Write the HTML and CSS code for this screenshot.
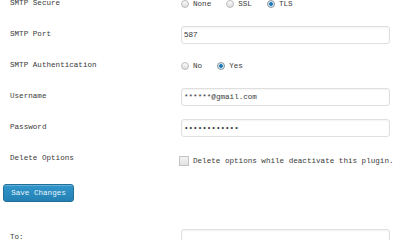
FILE: index.html
```html
<!DOCTYPE html>
<html lang="en">
<head>
<meta charset="UTF-8">
<title>SMTP Settings</title>
<link rel="stylesheet" href="styles.css">
</head>
<body>

<form class="settings">
  <div class="form-row">
    <label class="row-label">SMTP Secure</label>
    <div class="choices">
      <label class="choice"><input type="radio" name="secure"> None</label>
      <label class="choice"><input type="radio" name="secure"> SSL</label>
      <label class="choice"><input type="radio" name="secure" checked> TLS</label>
    </div>
  </div>

  <div class="form-row">
    <label class="row-label">SMTP Port</label>
    <input class="text-field port" type="text" value="587">
  </div>

  <div class="form-row">
    <label class="row-label">SMTP Authentication</label>
    <div class="choices">
      <label class="choice"><input type="radio" name="auth"> No</label>
      <label class="choice"><input type="radio" name="auth" checked> Yes</label>
    </div>
  </div>

  <div class="form-row">
    <label class="row-label">Username</label>
    <input class="text-field" type="text" value="******@gmail.com">
  </div>

  <div class="form-row">
    <label class="row-label">Password</label>
    <input class="text-field" type="password" value="xxxxxxxxxxxx">
  </div>

  <div class="form-row">
    <label class="row-label">Delete Options</label>
    <label class="choice delete-choice"><input type="checkbox"> Delete options while deactivate this plugin.</label>
  </div>

  <div class="actions">
    <button type="button" class="button-primary">Save Changes</button>
  </div>

  <div class="form-row test-row">
    <label class="row-label">To:</label>
    <input class="text-field" type="text" value="">
  </div>
</form>

</body>
</html>
```

FILE: styles.css
```css
body {
  margin: 0;
  background-color: #fff;
  color: #3a3a3a;
  font-family: "Liberation Mono", "DejaVu Sans Mono", monospace;
  font-size: 7.6px;
  overflow: hidden;
}

.settings {
  margin-top: -12px;
}

.form-row {
  display: grid;
  grid-template-columns: 181px 1fr;
  align-items: center;
  height: 31px;
}

.row-label {
  padding-left: 10px;
  margin-top: -2px;
}

.choices {
  display: flex;
  gap: 15px;
}

.choice {
  display: flex;
  align-items: center;
  gap: 4px;
  white-space: nowrap;
}

.delete-choice {
  margin-top: 4px;
}

/* radio and checkbox look like the old admin skin */
.choice input {
  appearance: none;
  margin: 0;
  width: 8px;
  height: 8px;
  border: 1px solid #bbb;
  background: linear-gradient(#fdfdfd, #dcdcdc);
  box-sizing: border-box;
}

.choice input[type="radio"] {
  border-radius: 50%;
}

.choice input[type="radio"]:checked {
  border-color: #8a9aa6;
  background: radial-gradient(circle, #1a6fa8 0, #2b86c2 1.6px, #dfe6ea 2.2px, #d0d4d6 100%);
}

.choice input[type="checkbox"] {
  width: 10px;
  height: 10px;
  margin-left: -2px;
  border-color: #c4c4c4;
  background: linear-gradient(#f4f4f4, #e2e2e2);
}

.text-field {
  width: 209px;
  height: 18px;
  box-sizing: border-box;
  margin: 0;
  padding: 0 2px;
  border: 1px solid #dfdfdf;
  border-radius: 3px;
  box-shadow: inset 0 1px 2px rgba(0, 0, 0, 0.05);
  font-family: "Liberation Mono", monospace;
  font-size: 7.6px;
  color: #3a3a3a;
  background: #fff;
}

.text-field.port {
  font-family: "Liberation Sans", Arial, sans-serif;
  font-size: 8px;
}

.actions {
  padding: 10px 0 0 3px;
}

.button-primary {
  display: block;
  width: 71px;
  height: 18px;
  padding: 0;
  border: 1px solid #1f6f99;
  border-radius: 3px;
  background: linear-gradient(#3196cc, #2480b3);
  color: #e8f4fb;
  font-family: "Liberation Mono", monospace;
  font-size: 7.6px;
  box-shadow: inset 0 1px 0 rgba(255, 255, 255, 0.25);
}

.test-row {
  margin-top: 20px;
}
```
